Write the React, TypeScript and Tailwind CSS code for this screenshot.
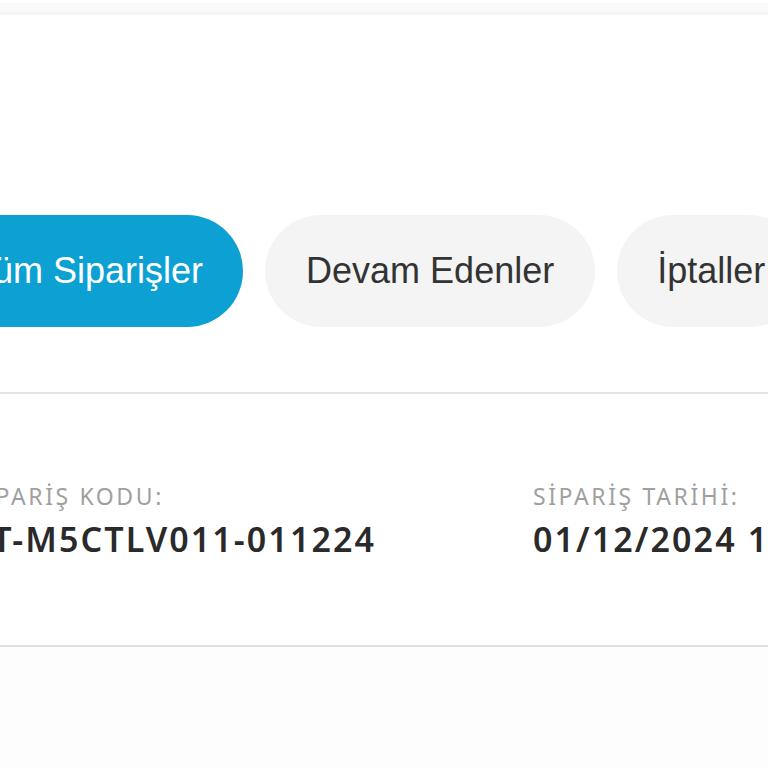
import React from "react";

export default function App() {
  return (
    <div className="w-[768px] h-[768px] overflow-hidden bg-white flex flex-col">
      <div className="mt-[3px] h-[12px] bg-[#fafafa] border-b-[3px] border-[#f3f3f3] shrink-0" />
      <div className="h-[200px] shrink-0" />
      <div className="flex gap-[22px] ml-[-69px] font-['Liberation_Sans',Arial,sans-serif] shrink-0">
        <div className="h-[112px] px-[40px] rounded-full bg-[#0ca0d3] text-white text-[36px] flex items-center whitespace-nowrap shrink-0">
          Tüm Siparişler
        </div>
        <div className="h-[112px] px-[41px] rounded-full bg-[#f4f4f4] text-[#333333] text-[36px] flex items-center whitespace-nowrap shrink-0">
          Devam Edenler
        </div>
        <div className="h-[112px] px-[40px] rounded-full bg-[#f4f4f4] text-[#333333] text-[36px] flex items-center whitespace-nowrap shrink-0">
          İptaller
        </div>
      </div>
      <div className="h-[65px] shrink-0" />
      <div className="h-[2px] bg-[#e4e4e4] shrink-0" />
      <div className="h-[88px] shrink-0" />
      <div className="flex ml-[-30px] font-['Noto_Sans',sans-serif] whitespace-nowrap h-[163px] shrink-0">
        <div className="w-[563px] shrink-0 flex flex-col">
          <span className="text-[23px] leading-[28px] text-[#a0a0a0] tracking-[2.6px]">SİPARİŞ KODU:</span>
          <span className="mt-[9px] text-[34px] leading-[40px] font-semibold text-[#2a2a2a] tracking-[2.1px]">TT-M5CTLV011-011224</span>
        </div>
        <div className="shrink-0 flex flex-col">
          <span className="text-[23px] leading-[28px] text-[#a0a0a0] tracking-[2.6px]">SİPARİŞ TARİHİ:</span>
          <span className="mt-[9px] text-[34px] leading-[40px] font-semibold text-[#2a2a2a] tracking-[2.1px]">01/12/2024 12:45</span>
        </div>
      </div>
      <div className="h-[2px] bg-[#e0e0e0] shrink-0" />
      <div className="flex-1 bg-[#fdfdfd]" />
    </div>
  );
}
